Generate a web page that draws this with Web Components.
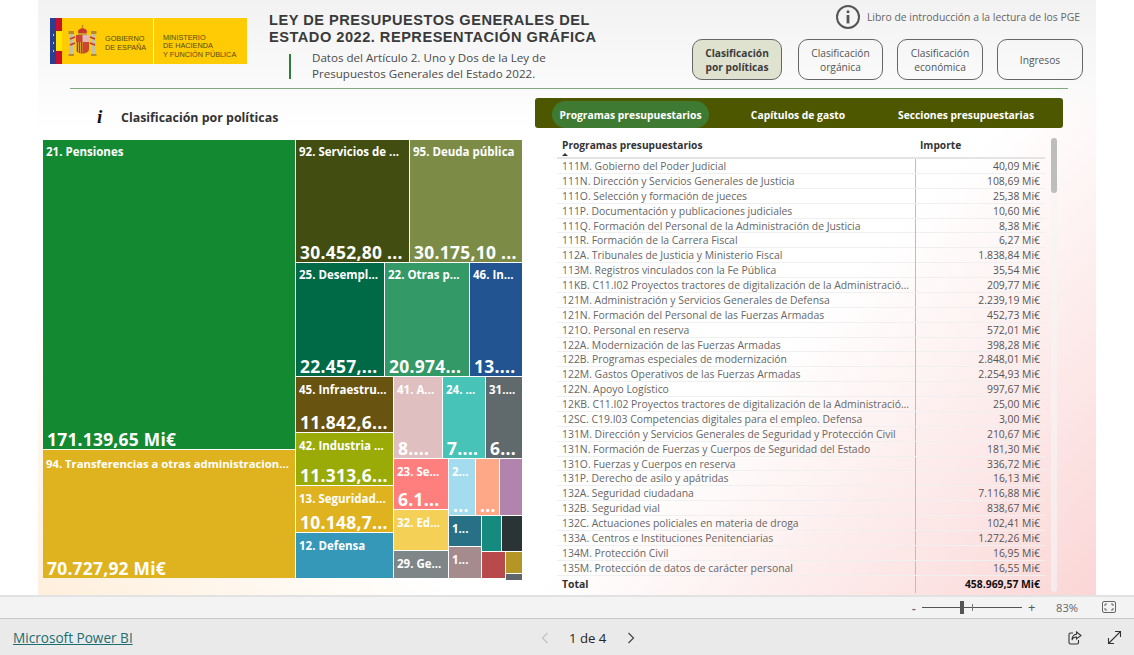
<!DOCTYPE html>
<html lang="es">
<head>
<meta charset="utf-8">
<title>Ley de Presupuestos Generales del Estado 2022</title>
<style>
  html, body { margin: 0; height: 100%; background: #fff; overflow: hidden; }
  body { font-family: "Open Sans", "Noto Sans", sans-serif; display: flex; flex-direction: column; width: 1134px; height: 655px; }
</style>
</head>
<body>
<report-page>
  <report-header slot="head"></report-header>
  <div slot="left">
    <visual-title>Clasificación por políticas</visual-title>
    <tm-split dir="col" w="479" h="438">
      <tm-split dir="row" w="479" h="438">
        <tm-split dir="col" w="252" h="438">
          <tm-cell h="309" w="252" color="#138a32" label="21. Pensiones" value="171.139,65 Mi€" big></tm-cell>
          <tm-cell h="128" w="252" color="#dfb31f" label="94. Transferencias a otras administracion..." value="70.727,92 Mi€" big style="--label-size:11.3px;--label-top:7px"></tm-cell>
        </tm-split>
        <tm-split dir="col" w="226" h="438">
          <tm-split dir="row" w="226" h="122">
            <tm-cell w="113" h="122" color="#424e11" label="92. Servicios de ..." value="30.452,80 ..."></tm-cell>
            <tm-cell w="112" h="122" color="#7c8c47" label="95. Deuda pública" value="30.175,10 ..."></tm-cell>
          </tm-split>
          <tm-split dir="row" w="226" h="113">
            <tm-cell w="88" h="113" color="#006a47" label="25. Desempl..." value="22.457,..."></tm-cell>
            <tm-cell w="84" h="113" color="#339966" label="22. Otras p..." value="20.974..."></tm-cell>
            <tm-cell w="52" h="113" color="#215490" label="46. In..." value="13...."></tm-cell>
          </tm-split>
          <tm-split dir="row" w="226" h="201" style="--label-top:6px">
            <tm-split dir="col" w="97" h="201">
              <tm-cell w="97" h="55" color="#695310" label="45. Infraestru..." value="11.842,6..."></tm-cell>
              <tm-cell w="97" h="52" color="#9aab07" label="42. Industria ..." value="11.313,6..."></tm-cell>
              <tm-cell w="97" h="46" color="#dfb31f" label="13. Seguridad..." value="10.148,7..."></tm-cell>
              <tm-cell w="97" h="45" color="#3598b9" label="12. Defensa"></tm-cell>
            </tm-split>
            <tm-split dir="col" w="128" h="201">
              <tm-split dir="row" w="128" h="81">
                <tm-cell w="48" h="81" color="#dfbfc0" label="41. A..." value="8...."></tm-cell>
                <tm-cell w="42" h="81" color="#48c3b8" label="24. ..." value="7...."></tm-cell>
                <tm-cell w="36" h="81" color="#606a6d" label="31...." value="6..."></tm-cell>
              </tm-split>
              <tm-split dir="row" w="128" h="119">
                <tm-split dir="col" w="54" h="119">
                  <tm-cell w="54" h="50" color="#ff7f7f" label="23. Se..." value="6.1..."></tm-cell>
                  <tm-cell w="54" h="40" color="#f4d057" label="32. Ed..."></tm-cell>
                  <tm-cell w="54" h="27" color="#7e8688" label="29. Ge..."></tm-cell>
                </tm-split>
                <tm-split dir="col" w="73" h="119">
                  <tm-split dir="row" w="73" h="56">
                    <tm-cell w="26" h="56" color="#a3dcef" label="2..." value="..."></tm-cell>
                    <tm-cell w="23" h="56" color="#ffa888" value="..."></tm-cell>
                    <tm-cell w="22" h="56" color="#b283ac"></tm-cell>
                  </tm-split>
                  <tm-split dir="row" w="73" h="62">
                    <tm-split dir="col" w="32" h="62">
                      <tm-cell w="32" h="30" color="#277085" label="1..."></tm-cell>
                      <tm-cell w="32" h="31" color="#a58b8d" label="1..."></tm-cell>
                    </tm-split>
                    <tm-split dir="col" w="40" h="62">
                      <tm-split dir="row" w="40" h="35">
                        <tm-cell w="19" h="35" color="#158a7e"></tm-cell>
                        <tm-cell w="20" h="35" color="#2a3437"></tm-cell>
                      </tm-split>
                      <tm-split dir="row" w="40" h="26">
                        <tm-cell w="23" h="26" color="#b84a4c"></tm-cell>
                        <tm-split dir="col" w="16" h="26">
                          <tm-cell w="16" h="21" color="#b59525"></tm-cell>
                          <tm-cell w="16" h="4" color="#5f6669"></tm-cell>
                        </tm-split>
                      </tm-split>
                    </tm-split>
                  </tm-split>
                </tm-split>
              </tm-split>
            </tm-split>
          </tm-split>
        </tm-split>
      </tm-split>
    </tm-split>
  </div>
  <div slot="right">
    <tab-bar></tab-bar>
    <budget-table></budget-table>
  </div>
</report-page>
<status-bar></status-bar>
<pbi-footer></pbi-footer>

<script>
// Tabla de programas presupuestarios
const PROGRAMAS = [
  ["111M. Gobierno del Poder Judicial", "40,09 Mi€"],
  ["111N. Dirección y Servicios Generales de Justicia", "108,69 Mi€"],
  ["111O. Selección y formación de jueces", "25,38 Mi€"],
  ["111P. Documentación y publicaciones judiciales", "10,60 Mi€"],
  ["111Q. Formación del Personal de la Administración de Justicia", "8,38 Mi€"],
  ["111R. Formación de la Carrera Fiscal", "6,27 Mi€"],
  ["112A. Tribunales de Justicia y Ministerio Fiscal", "1.838,84 Mi€"],
  ["113M. Registros vinculados con la Fe Pública", "35,54 Mi€"],
  ["11KB. C11.I02 Proyectos tractores de digitalización de la Administració...", "209,77 Mi€"],
  ["121M. Administración y Servicios Generales de Defensa", "2.239,19 Mi€"],
  ["121N. Formación del Personal de las Fuerzas Armadas", "452,73 Mi€"],
  ["121O. Personal en reserva", "572,01 Mi€"],
  ["122A. Modernización de las Fuerzas Armadas", "398,28 Mi€"],
  ["122B. Programas especiales de modernización", "2.848,01 Mi€"],
  ["122M. Gastos Operativos de las Fuerzas Armadas", "2.254,93 Mi€"],
  ["122N. Apoyo Logístico", "997,67 Mi€"],
  ["12KB. C11.I02 Proyectos tractores de digitalización de la Administració...", "25,00 Mi€"],
  ["12SC. C19.I03 Competencias digitales para el empleo. Defensa", "3,00 Mi€"],
  ["131M. Dirección y Servicios Generales de Seguridad y Protección Civil", "210,67 Mi€"],
  ["131N. Formación de Fuerzas y Cuerpos de Seguridad del Estado", "181,30 Mi€"],
  ["131O. Fuerzas y Cuerpos en reserva", "336,72 Mi€"],
  ["131P. Derecho de asilo y apátridas", "16,13 Mi€"],
  ["132A. Seguridad ciudadana", "7.116,88 Mi€"],
  ["132B. Seguridad vial", "838,67 Mi€"],
  ["132C. Actuaciones policiales en materia de droga", "102,41 Mi€"],
  ["133A. Centros e Instituciones Penitenciarias", "1.272,26 Mi€"],
  ["134M. Protección Civil", "16,95 Mi€"],
  ["135M. Protección de datos de carácter personal", "16,55 Mi€"],
];

class ReportPage extends HTMLElement {
  constructor() {
    super();
    this.attachShadow({ mode: "open" });
    this.shadowRoot.innerHTML = `
      <style>
        :host {
          display: flex; flex-direction: column;
          width: 1058px; height: 595px; margin-left: 38px; flex: none;
          background:
            linear-gradient(to bottom, #f2f2f2 0, rgba(255,255,255,0) 130px),
            linear-gradient(315deg, #fbd6d6 0, rgba(255,255,255,0) 34%),
            linear-gradient(35deg, #ffefdc 0, rgba(255,255,255,0) 22%),
            #fff;
        }
        hr { border: 0; height: 1px; background: #7fa87f; margin: 0 28px 0 32px; flex: none; }
        .body { display: flex; flex: 1; }
        .left { width: 479px; margin-left: 5px; flex: none; }
        .right { margin-left: 13px; width: 528px; flex: none; }
      </style>
      <slot name="head"></slot>
      <hr>
      <div class="body">
        <div class="left"><slot name="left"></slot></div>
        <div class="right"><slot name="right"></slot></div>
      </div>`;
  }
}

class ReportHeader extends HTMLElement {
  constructor() {
    super();
    this.attachShadow({ mode: "open" });
    this.shadowRoot.innerHTML = `
      <style>
        :host { display: flex; height: 88px; flex: none; padding-left: 12px; box-sizing: border-box; }
        .logo { margin-top: 18px; flex: none; width: 197px; height: 46px; display: flex; }
        .flag { width: 12px; flex: none; background: linear-gradient(to right, #2a3f8f 0 6px, #c8102e 6px 12px); position: relative; }
        .flag i { position: absolute; left: 6px; right: 0; top: 13px; height: 20px; background: #ffe600; }
        .flag b { position: absolute; left: 2.5px; width: 1.5px; height: 1.5px; background: #e8d44a; }
        .gob { width: 91px; background: #ffcb05; display: flex; align-items: center; gap: 8px; padding-left: 6px; box-sizing: border-box; }
        .gob span { padding-top: 5px; }
        .min { width: 93px; margin-left: 1px; background: #ffcb05; padding: 16px 0 0 9px; box-sizing: border-box; }
        .logo span { display: block; font: 7.3px/8.4px "Liberation Sans", sans-serif; color: #5c4a10; white-space: nowrap; }
        .title { margin-left: 22px; width: 400px; flex: none; padding-top: 12px; }
        h1 { margin: 0; font: bold 14.6px/17px "Liberation Sans", sans-serif; letter-spacing: .5px; color: #3a3a3a; white-space: nowrap; }
        .sub { display: flex; margin: 4px 0 0 20px; align-items: center; }
        .sub i { width: 2px; height: 25px; background: #2f7d3a; flex: none; }
        .sub p { margin: 0 0 0 21px; font-size: 11.6px; line-height: 16px; color: #4a4a4a; white-space: nowrap; }
        .side { margin-left: 23px; width: 391px; flex: none; }
        .book { display: flex; justify-content: flex-end; align-items: center; height: 25px; margin-top: 4px; gap: 6px; padding-right: 3px; font-size: 10.4px; color: #666; white-space: nowrap; }
        .nav { display: flex; margin-top: 10px; }
        nav-button:nth-child(1) { width: 90px; }
        nav-button:nth-child(2) { width: 85px; margin-left: 16px; }
        nav-button:nth-child(3) { width: 86px; margin-left: 14px; }
        nav-button:nth-child(4) { width: 86px; margin-left: 14px; }
      </style>
      <div class="logo">
        <div class="flag"><i></i><b style="top:16px"></b><b style="top:24px"></b><b style="top:32px"></b></div>
        <div class="gob">
          <svg width="29" height="33" viewBox="0 0 29 33">
            <path d="M10 7 C10 2 19 2 19 7 L18 9 H11 Z" fill="#c8362c"/>
            <rect x="13.8" y="0" width="1.4" height="3" fill="#b9892a"/>
            <rect x="10" y="8" width="9" height="2" fill="#c99a2e"/>
            <path d="M8 10 H21 V24 C21 30 8 30 8 24 Z" fill="#c9472f"/>
            <path d="M14.5 10 H21 V17 H14.5 Z" fill="#e4b9b4"/>
            <path d="M8 17 H14.5 V28 C11 28 8 27 8 24 Z" fill="#d9a12c"/>
            <path d="M9.5 17 v10 M11.5 17 v11 M13.5 17 v11" stroke="#b8342a" stroke-width="1"/>
            <rect x="1.5" y="8" width="3.5" height="22" fill="#c4c0a8"/>
            <rect x="24" y="8" width="3.5" height="22" fill="#c4c0a8"/>
            <rect x="0.5" y="6" width="5.5" height="3" fill="#b8892c"/>
            <rect x="23" y="6" width="5.5" height="3" fill="#b8892c"/>
            <rect x="0.5" y="29" width="5.5" height="2" fill="#b8892c"/>
            <rect x="23" y="29" width="5.5" height="2" fill="#b8892c"/>
            <path d="M2 14 L7 12 M27 14 L22 12 M2 20 L7 18 M27 20 L22 18" stroke="#c8362c" stroke-width="1.6"/>
          </svg>
          <span>GOBIERNO<br>DE ESPAÑA</span>
        </div>
        <div class="min"><span>MINISTERIO<br>DE HACIENDA<br>Y FUNCIÓN PÚBLICA</span></div>
      </div>
      <div class="title">
        <h1>LEY DE PRESUPUESTOS GENERALES DEL<br>ESTADO 2022. REPRESENTACIÓN GRÁFICA</h1>
        <div class="sub"><i></i><p>Datos del Artículo 2. Uno y Dos de la Ley de<br>Presupuestos Generales del Estado 2022.</p></div>
      </div>
      <div class="side">
        <div class="book">
          <svg width="26" height="26" viewBox="0 0 26 26"><circle cx="13" cy="13" r="11" fill="none" stroke="#555" stroke-width="2"/><circle cx="13" cy="7.8" r="1.5" fill="#555"/><rect x="11.6" y="11" width="2.8" height="8.4" fill="#555"/></svg>
          <span>Libro de introducción a la lectura de los PGE</span>
        </div>
        <div class="nav">
          <nav-button active>Clasificación<br>por políticas</nav-button>
          <nav-button>Clasificación<br>orgánica</nav-button>
          <nav-button>Clasificación<br>económica</nav-button>
          <nav-button>Ingresos</nav-button>
        </div>
      </div>`;
  }
}

class NavButton extends HTMLElement {
  constructor() {
    super();
    this.attachShadow({ mode: "open" });
    this.shadowRoot.innerHTML = `
      <style>
        :host {
          display: flex; align-items: center; justify-content: center; text-align: center;
          height: 41px; box-sizing: border-box; flex: none;
          border: 1px solid #666; border-radius: 10px;
          font-size: 10.2px; line-height: 14px; color: #555;
        }
        :host([active]) { background: #dfe2cf; font-weight: bold; color: #3c3c3c; font-size: 10.2px; }
      </style>
      <slot></slot>`;
  }
}

class VisualTitle extends HTMLElement {
  constructor() {
    super();
    this.attachShadow({ mode: "open" });
    this.shadowRoot.innerHTML = `
      <style>
        :host { display: flex; align-items: center; height: 51px; padding: 5px 0 0 54px; box-sizing: border-box; font-weight: bold; font-size: 12.4px; color: #333; }
        i { font: italic bold 19px "Liberation Serif", serif; color: #111; width: 24px; flex: none; }
      </style>
      <i>i</i><slot></slot>`;
  }
}

// Contenedor del treemap: filas y columnas anidadas
class TmSplit extends HTMLElement {
  constructor() {
    super();
    this.attachShadow({ mode: "open" });
    this.shadowRoot.innerHTML = `
      <style>
        :host { display: flex; flex: none; gap: 1px; }
        :host([dir="col"]) { flex-direction: column; }
        :host([dir="row"]) { flex-direction: row; }
      </style>
      <slot></slot>`;
  }
  connectedCallback() {
    this.style.width = this.getAttribute("w") + "px";
    this.style.height = this.getAttribute("h") + "px";
  }
}

class TmCell extends HTMLElement {
  constructor() {
    super();
    this.attachShadow({ mode: "open" });
  }
  connectedCallback() {
    const label = this.getAttribute("label");
    const value = this.getAttribute("value");
    this.style.width = this.getAttribute("w") + "px";
    this.style.height = this.getAttribute("h") + "px";
    this.style.background = this.getAttribute("color");
    this.shadowRoot.innerHTML = `
      <style>
        :host {
          display: flex; flex-direction: column; justify-content: space-between; flex: none;
          box-sizing: border-box; padding: var(--label-top, 5px) 0 0 3px;
          color: #fff; font-weight: bold; white-space: nowrap;
        }
        .l { font-size: var(--label-size, 11.5px); line-height: 14px; }
        .v { font-size: 17.4px; line-height: 19px; letter-spacing: .3px; margin: auto 0 0 1px; }
        :host([big]) .v { letter-spacing: .25px; }
      </style>
      ${label ? `<div class="l">${label}</div>` : ""}
      ${value ? `<div class="v">${value}</div>` : ""}`;
  }
}

class TabBar extends HTMLElement {
  constructor() {
    super();
    this.attachShadow({ mode: "open" });
    this.shadowRoot.innerHTML = `
      <style>
        :host {
          display: flex; align-items: flex-end; height: 30px; margin-top: 9px; box-sizing: border-box;
          background: #4d5700; border-radius: 3px; color: #fff; font-weight: bold; font-size: 10.3px;
          padding-left: 17px;
        }
        span { display: flex; align-items: center; height: 27px; white-space: nowrap; justify-content: center; }
        .on { width: 157px; background: #3f7a32; border-radius: 14px; }
        .b { width: 128px; margin-left: 25px; }
        .c { width: 160px; margin-left: 24px; }
      </style>
      <span class="on">Programas presupuestarios</span>
      <span class="b">Capítulos de gasto</span>
      <span class="c">Secciones presupuestarias</span>`;
  }
}

class BudgetTable extends HTMLElement {
  constructor() {
    super();
    this.attachShadow({ mode: "open" });
  }
  connectedCallback() {
    const rows = PROGRAMAS.map(([name, amount]) => `
      <div class="row"><div class="n">${name}</div><div class="a">${amount}</div></div>`).join("");
    this.shadowRoot.innerHTML = `
      <style>
        :host { display: flex; margin: 10px 0 0 22px; gap: 6px; }
        .table { width: 488px; flex: none; }
        .head { display: grid; grid-template-columns: 358px 130px; height: 21px; box-sizing: border-box; border-bottom: 2px solid #e4e4e4; font-weight: bold; font-size: 10.2px; color: #333; line-height: 14px; position: relative; }
        .head .c { padding-left: 5px; }
        .arrow { position: absolute; left: 5px; top: 15px; width: 0; height: 0; border: 3.5px solid transparent; border-top: 0; border-bottom: 3px solid #333; }
        .row { display: grid; grid-template-columns: 359px 129px; height: 14.89px; font-size: 10.4px; line-height: 14.4px; color: #666; box-sizing: border-box; border-bottom: 1px solid #f0f0f0; white-space: nowrap; }
        .n { padding-left: 5px; border-right: 1px solid #bdbdbd; }
        .a { text-align: right; padding-right: 5px; color: #555; }
        .total { display: grid; grid-template-columns: 359px 129px; height: 17px; line-height: 16px; font-size: 10.4px; font-weight: bold; color: #333; }
        .total .a { color: #111; }
        .bar { width: 6px; height: 454px; background: rgba(245,245,245,.6); border-radius: 3px; flex: none; }
        .bar i { display: block; height: 55px; background: #bdbdbd; border-radius: 3px; }
      </style>
      <div class="table">
        <div class="head"><div class="c">Programas presupuestarios</div><div class="c">Importe</div><span class="arrow"></span></div>
        ${rows}
        <div class="total"><div class="n">Total</div><div class="a">458.969,57 Mi€</div></div>
      </div>
      <div class="bar"><i></i></div>`;
  }
}

class StatusBar extends HTMLElement {
  constructor() {
    super();
    this.attachShadow({ mode: "open" });
    this.shadowRoot.innerHTML = `
      <style>
        :host { display: flex; align-items: center; height: 23px; box-sizing: border-box; flex: none; background: #f3f3f3; border-top: 2px solid #e2e2e2; padding-bottom: 1px; font-size: 11.2px; color: #666; }
        .minus { margin-left: 912px; width: 10px; font-weight: bold; }
        .slider { width: 100px; height: 1px; background: #555; position: relative; }
        .slider b { position: absolute; left: 38px; top: -6px; width: 4px; height: 13px; background: #555; }
        .slider u { position: absolute; left: 50px; top: -3px; width: 1px; height: 7px; background: #777; }
        .plus { margin-left: 6px; width: 14px; font-size: 13px; color: #555; }
        .pct { margin-left: 14px; width: 46px; }
      </style>
      <span class="minus">-</span>
      <div class="slider"><b></b><u></u></div>
      <span class="plus">+</span>
      <span class="pct">83%</span>
      <svg width="14" height="12" viewBox="0 0 14 12" fill="none" stroke="#666"><rect x=".5" y=".5" width="13" height="11" rx="1.5"/><path d="M3 5 V3 H5 M9 3 H11 V5 M11 7 V9 H9 M5 9 H3 V7"/></svg>`;
  }
}

class PbiFooter extends HTMLElement {
  constructor() {
    super();
    this.attachShadow({ mode: "open" });
    this.shadowRoot.innerHTML = `
      <style>
        :host { display: flex; align-items: center; flex: 1; box-sizing: border-box; background: #eaeaea; border-top: 1px solid #c8c8c8; padding: 1px 0 0 13px; }
        a { color: #1c6e70; font-size: 13.6px; text-decoration: underline; width: 528px; flex: none; }
        svg { flex: none; }
        .pg { width: 38px; margin: 0 20px; font-size: 13.2px; color: #252525; white-space: nowrap; flex: none; }
        .share { margin-left: 433px; }
        .exp { margin-left: 25px; }
      </style>
      <a href="#">Microsoft Power BI</a>
      <svg width="8" height="12" viewBox="0 0 8 12" fill="none" stroke="#c2c2c2" stroke-width="1.2"><path d="M6.5 1 L1.5 6 L6.5 11"/></svg>
      <span class="pg">1 de 4</span>
      <svg width="8" height="12" viewBox="0 0 8 12" fill="none" stroke="#444" stroke-width="1.2"><path d="M1.5 1 L6.5 6 L1.5 11"/></svg>
      <svg class="share" width="14" height="14" viewBox="0 0 14 14" fill="none" stroke="#333" stroke-width="1.1"><path d="M5 2 H2.5 A1.5 1.5 0 0 0 1 3.5 V11.5 A1.5 1.5 0 0 0 2.5 13 H9 A1.5 1.5 0 0 0 10.5 11.5 V9"/><path d="M8.5 1 L13 4.5 L8.5 8 V6 C6 6 4.6 7 4 9 C4 5.5 6 3.5 8.5 3.2 Z"/></svg>
      <svg class="exp" width="15" height="15" viewBox="0 0 15 15" fill="none" stroke="#333" stroke-width="1.1"><path d="M1.5 13.5 L13.5 1.5 M8 1.5 H13.5 V7 M1.5 8 V13.5 H7"/></svg>`;
  }
}

customElements.define("report-page", ReportPage);
customElements.define("report-header", ReportHeader);
customElements.define("nav-button", NavButton);
customElements.define("visual-title", VisualTitle);
customElements.define("tm-split", TmSplit);
customElements.define("tm-cell", TmCell);
customElements.define("tab-bar", TabBar);
customElements.define("budget-table", BudgetTable);
customElements.define("status-bar", StatusBar);
customElements.define("pbi-footer", PbiFooter);
</script>
</body>
</html>
